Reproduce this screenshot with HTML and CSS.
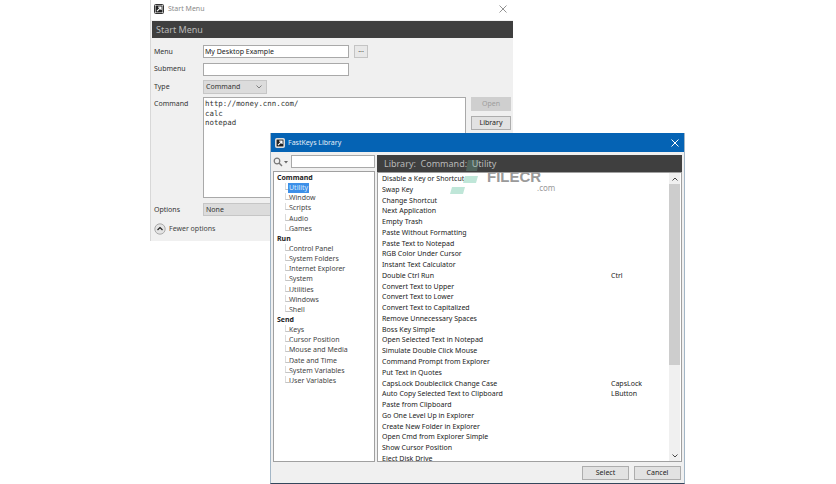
FILE: index.html
```html
<!DOCTYPE html>
<html lang="en">
<head>
<meta charset="utf-8">
<title>FastKeys</title>
<link rel="stylesheet" href="styles.css">
</head>
<body>
<section class="win start">
  <div class="start-title">
    <svg class="appicon" viewBox="0 0 10 10"><rect x="0.5" y="0.5" width="9" height="9" rx="1" fill="#fff" stroke="#333"/><rect x="1.5" y="1.5" width="7" height="7" fill="#222"/><path d="M3 7.2 6.4 3.8M4.2 3.2H7V6" fill="none" stroke="#fff" stroke-width="1.2"/></svg>
    <span class="start-name">Start Menu</span>
    <svg class="close" viewBox="0 0 8 8"><path d="M.5.5l7 7M7.5.5l-7 7" stroke="#777" stroke-width=".8"/></svg>
  </div>
  <div class="head start-head">Start Menu</div>
  <div class="form">
    <label>Menu</label>
    <div class="row"><div class="input w146">My Desktop Example</div><div class="dots">...</div></div>
    <label>Submenu</label>
    <div class="row"><div class="input w146"></div></div>
    <label>Type</label>
    <div class="row"><div class="select">Command<svg class="chev" viewBox="0 0 6 4"><path d="M.5.5 3 3 5.500.5" fill="none" stroke="#555" stroke-width=".7"/></svg></div></div>
    <label>Command</label>
    <div class="cmd-row">
      <div class="textarea">http://money.cnn.com/<br>calc<br>notepad</div>
      <div class="cmd-buttons"><div class="btn off">Open</div><div class="btn">Library</div></div>
    </div>
    <label class="opt-label">Options</label>
    <div class="row opt-row"><div class="select wide">None</div></div>
  </div>
  <div class="fewer">
    <svg class="circle" viewBox="0 0 12 12"><circle cx="6" cy="6" r="5.200" fill="#e4e4e4" stroke="#999" stroke-width=".8"/><path d="M3.500 7 6 4.500 8.500 7" fill="none" stroke="#222" stroke-width="1.200"/></svg>
    <span>Fewer options</span>
  </div>
</section>

<section class="win lib">
  <div class="lib-title">
    <svg class="appicon" viewBox="0 0 10 10"><rect x="0.5" y="0.5" width="9" height="9" rx="1" fill="#fff" stroke="#ddd"/><rect x="1.5" y="1.5" width="7" height="7" fill="#222"/><path d="M3 7.2 6.4 3.8M4.2 3.2H7V6" fill="none" stroke="#fff" stroke-width="1.2"/></svg>
    <span class="lib-name">FastKeys Library</span>
    <svg class="close" viewBox="0 0 8 8"><path d="M.5.5l7 7M7.5.5l-7 7" stroke="#fff" stroke-width="1"/></svg>
  </div>
  <div class="lib-body">
    <div class="left">
      <div class="search">
        <svg class="glass" viewBox="0 0 16 10"><circle cx="4" cy="4" r="2.800" fill="none" stroke="#777" stroke-width="1.200"/><path d="M6 6l3 3" stroke="#777" stroke-width="1.400"/><path d="M11 4h4l-2 2.500z" fill="#666"/></svg>
        <div class="input search-box"></div>
      </div>
      <div class="tree">
        <div class="root">Command</div>
        <div class="leaf"><span class="sel">Utility</span></div>
        <div class="leaf">Window</div>
        <div class="leaf">Scripts</div>
        <div class="leaf">Audio</div>
        <div class="leaf">Games</div>
        <div class="root">Run</div>
        <div class="leaf">Control Panel</div>
        <div class="leaf">System Folders</div>
        <div class="leaf">Internet Explorer</div>
        <div class="leaf">System</div>
        <div class="leaf">Utilities</div>
        <div class="leaf">Windows</div>
        <div class="leaf">Shell</div>
        <div class="root">Send</div>
        <div class="leaf">Keys</div>
        <div class="leaf">Cursor Position</div>
        <div class="leaf">Mouse and Media</div>
        <div class="leaf">Date and Time</div>
        <div class="leaf">System Variables</div>
        <div class="leaf">User Variables</div>
      </div>
    </div>
    <div class="right">
      <div class="head lib-head">Library:&nbsp; Command:&nbsp; Utility</div>
      <div class="list">
        <div class="items">
          <div class="item"><span>Disable a Key or Shortcut</span></div>
          <div class="item"><span>Swap Key</span></div>
          <div class="item"><span>Change Shortcut</span></div>
          <div class="item"><span>Next Application</span></div>
          <div class="item"><span>Empty Trash</span></div>
          <div class="item"><span>Paste Without Formatting</span></div>
          <div class="item"><span>Paste Text to Notepad</span></div>
          <div class="item"><span>RGB Color Under Cursor</span></div>
          <div class="item"><span>Instant Text Calculator</span></div>
          <div class="item"><span>Double Ctrl Run</span><span>Ctrl</span></div>
          <div class="item"><span>Convert Text to Upper</span></div>
          <div class="item"><span>Convert Text to Lower</span></div>
          <div class="item"><span>Convert Text to Capitalized</span></div>
          <div class="item"><span>Remove Unnecessary Spaces</span></div>
          <div class="item"><span>Boss Key Simple</span></div>
          <div class="item"><span>Open Selected Text in Notepad</span></div>
          <div class="item"><span>Simulate Double Click Mouse</span></div>
          <div class="item"><span>Command Prompt from Explorer</span></div>
          <div class="item"><span>Put Text in Quotes</span></div>
          <div class="item"><span>CapsLock Doubleclick Change Case</span><span>CapsLock</span></div>
          <div class="item"><span>Auto Copy Selected Text to Clipboard</span><span>LButton</span></div>
          <div class="item"><span>Paste from Clipboard</span></div>
          <div class="item"><span>Go One Level Up in Explorer</span></div>
          <div class="item"><span>Create New Folder in Explorer</span></div>
          <div class="item"><span>Open Cmd from Explorer Simple</span></div>
          <div class="item"><span>Show Cursor Position</span></div>
          <div class="item"><span>Eject Disk Drive</span></div>
        </div>
        <div class="scroll">
          <svg class="arrow" viewBox="0 0 6 4"><path d="M.5 3.500 3 1l2.500 2.500" fill="none" stroke="#333" stroke-width=".9"/></svg>
          <div class="thumb"></div>
          <svg class="arrow down" viewBox="0 0 6 4"><path d="M.5.5 3 3 5.500.5" fill="none" stroke="#333" stroke-width=".9"/></svg>
        </div>
      </div>
    </div>
  </div>
  <div class="foot"><div class="btn foot-btn">Select</div><div class="btn foot-btn">Cancel</div></div>
</section>

<div class="mark">
  <svg class="mark-logo" viewBox="0 0 30 36"><path d="M18 1H29L27 12H16z" fill="#7fd0b0" opacity=".25"/><path d="M15 17H28L26 24H13zM2 28H15L13 35H0z" fill="#bfe6d8"/></svg>
  <span class="mark-text">FILECR</span>
  <span class="mark-com">.com</span>
</div>
</body>
</html>
```

FILE: styles.css
```css
* { box-sizing: border-box; }
html, body { margin: 0; height: 100%; }
body {
  width: 836px; height: 484px; overflow: hidden; position: relative;
  background: #fff; color: #222;
  font: 7px/10px "Noto Sans", "Open Sans", sans-serif;
}
.win { position: absolute; }
.appicon { width: 10px; height: 10px; flex: none; }
.close { width: 8px; height: 8px; flex: none; margin-left: auto; }

.start {
  left: 150px; top: 0; width: 363px; height: 241px;
  background: #f0f0f0; border-left: 1px solid #d8d8d8;
}
.start-title {
  height: 20px; padding: 0 6px 2px 3px; background: #fff;
  display: flex; align-items: center; gap: 4px; color: #8a8a8a;
}
.head { background: #3f3f3f; color: #b9b9b9; font-size: 9px; }
.start-head { height: 17px; margin: 1px 0 0 1px; padding: 3px 4px 0; line-height: 11px; }
.form {
  display: grid; grid-template-columns: 49px 1fr;
  padding: 6.500px 0 0 3px; row-gap: 3.500px;
}
.form label { line-height: 14px; color: #333; }
.row { display: flex; gap: 5px; align-items: center; height: 14px; }
.input {
  background: #fff; border: 1px solid #a9a9a9; height: 13px;
  padding: 0 1px; line-height: 11px; color: #222;
}
.w146 { width: 146px; }
.dots {
  width: 14px; height: 13px; border: 1px solid #c4c4c4; background: #e8e8e8;
  text-align: center; line-height: 8px; color: #444;
}
.select {
  width: 64px; height: 14px; background: #dcdcdc; border: 1px solid #c6c6c6;
  padding: 0 2px; line-height: 12px; display: flex; align-items: center; justify-content: space-between;
  color: #333;
}
.select.wide { width: 90px; height: 13px; }
.chev { width: 6px; height: 4px; margin-right: 2px; }
.cmd-row { display: flex; gap: 5px; height: 101px; }
.textarea {
  width: 263px; background: #fff; border: 1px solid #a9a9a9;
  padding: 1px 1px; font: 7.400px/9.500px "DejaVu Sans Mono", "Liberation Mono", monospace; color: #333;
}
.cmd-buttons { display: flex; flex-direction: column; gap: 5px; }
.btn {
  width: 40px; height: 14px; background: #e2e2e2; border: 1px solid #adadad;
  text-align: center; line-height: 12px; color: #222;
}
.btn.off { background: #cfcfcf; border-color: #cfcfcf; color: #9d9d9d; }
.opt-label { margin-top: 1px; }
.opt-row { margin-top: 1px; }
.fewer { display: flex; align-items: center; gap: 3px; padding: 6.500px 0 0 3px; color: #444; }
.circle { width: 12px; height: 12px; }

.lib {
  left: 270px; top: 133px; width: 415px; height: 351px;
  background: #f0f0f0; border: 1px solid #a3b6c6; border-top: 0; border-bottom-color: #33475c;
  display: flex; flex-direction: column;
}
.lib-title {
  height: 19px; background: #0563b4; color: #e4eef7;
  display: flex; align-items: center; gap: 3px; padding: 0 5px 0 4px;
}
.lib-body { display: grid; grid-template-columns: 102px 1fr; gap: 2px; padding: 3px 2px 0 2px; }
.left { display: flex; flex-direction: column; }
.search { display: flex; align-items: center; gap: 2px; height: 13px; }
.glass { width: 16px; height: 10px; flex: none; }
.search-box { flex: 1; }
.tree {
  background: #fff; border: 1px solid #a0a0a0; height: 291px; margin-top: 3px;
  padding: 1px 0 0 3px; color: #444;
}
.root { height: 10.150px; line-height: 10px; font-weight: 700; color: #222; }
.leaf { height: 10.150px; line-height: 10px; padding-left: 12px; position: relative; }
.leaf::before {
  content: ""; position: absolute; left: 8px; top: 0; width: 6px; height: 6px;
  border-left: 1px solid #dcdcdc; border-bottom: 1px solid #c4c4c4;
}
.sel { background: #3d8fe8; color: #dcecff; display: inline-block; padding: 0 1px; margin-left: -1px; position: relative; }
.right { display: flex; flex-direction: column; }
.lib-head { height: 17px; padding: 3px 7px 0; line-height: 11px; }
.list {
  background: #fff; border: 1px solid #a0a0a0; height: 290px;
  display: flex; overflow: hidden;
}
.items { flex: 1; padding: 1px 0 0 4px; min-width: 0; }
.item {
  height: 10.770px; line-height: 10.770px; white-space: nowrap;
  display: grid; grid-template-columns: 229px 1fr;
}
.scroll {
  width: 11px; margin-right: 1px; background: #f0f0f0; display: flex; flex-direction: column;
  align-items: center; padding: 4px 0 3px;
}
.arrow { width: 6px; height: 4px; flex: none; }
.thumb { width: 100%; height: 181px; background: #cdcdcd; margin-top: 3px; }
.down { margin-top: auto; }
.foot { display: flex; justify-content: flex-end; gap: 5px; padding: 4px 3px 0 0; flex: 1; }
.foot-btn { width: 47px; height: 14px; }

.mark { position: absolute; left: 450px; top: 159px; width: 110px; height: 36px; }
.mark-logo { position: absolute; left: 0; top: 0; width: 30px; height: 36px; }
.mark-text {
  position: absolute; left: 37px; top: 9px; font: 700 15px/18px "Liberation Sans", sans-serif;
  color: #9a9a9a;
}
.mark-com { position: absolute; left: 87px; top: 24px; font-size: 8px; color: #9a9a9a; }
```
